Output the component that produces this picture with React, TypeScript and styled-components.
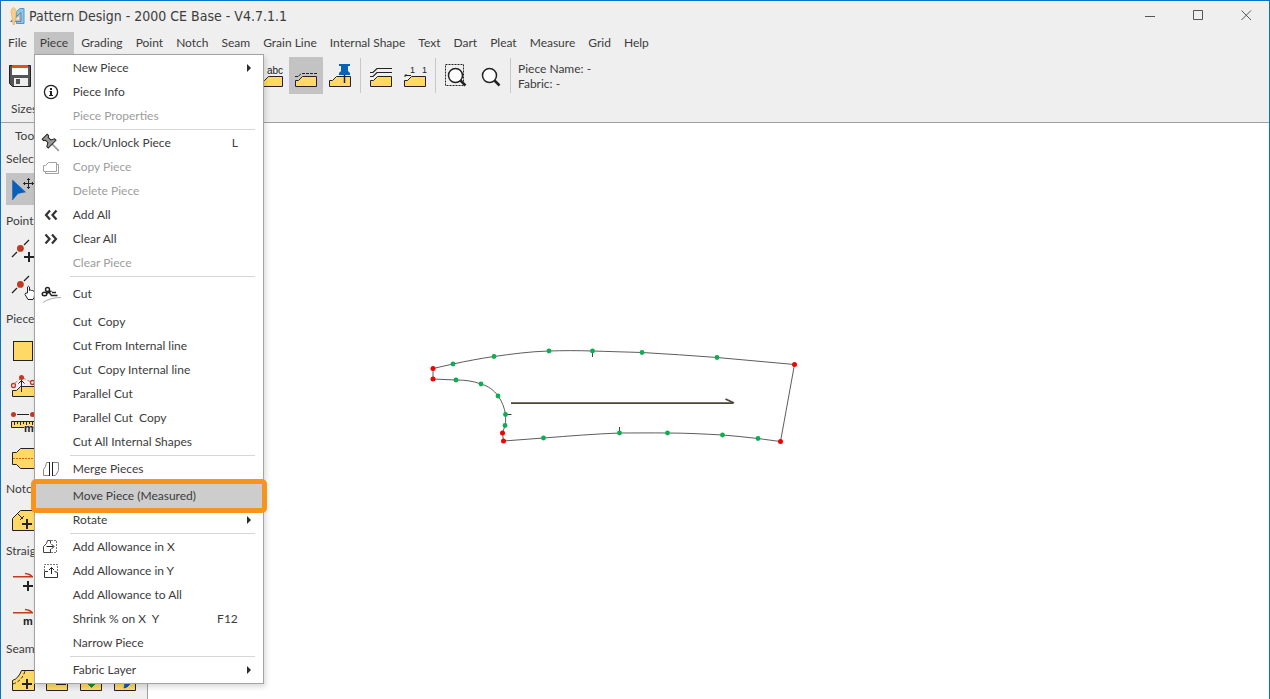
import React, { ReactNode } from "react";
import styled, { createGlobalStyle } from "styled-components";

const GlobalStyle = createGlobalStyle`
  * { box-sizing: border-box; }
  body { margin: 0; background: #fff; }
  button { font: inherit; color: inherit; background: none; border: 0; padding: 0; margin: 0; }
  svg { display: block; flex: none; }
`;

const ui = '"Lato", "Open Sans", sans-serif';
const ink = "#222";
const yellow = "#ffd966";
const red = "#c03a20";

const Window = styled.div`
  display: flex;
  flex-direction: column;
  min-height: 100vh;
  overflow: hidden;
  border: solid #0b73c5;
  border-width: 1px 1px 0;
  font: 12px/16px ${ui};
  color: #3c3c3c;
`;

const Header = styled.header`
  background: #efefef;
  border-bottom: 1px solid #a0a0a0;
`;

const TitleBar = styled.div`
  display: flex;
  align-items: center;
  height: 31px;
  padding: 0 0 2px 8px;
  gap: 4px;
`;

const Title = styled.h1`
  flex: 1;
  margin: 0;
  font: 14px/18px "DejaVu Sans Condensed", "DejaVu Sans", sans-serif;
`;

const WindowControls = styled.div`
  display: flex;
  gap: 2px;
`;

const WindowButton = styled.button`
  display: grid;
  place-items: center;
  width: 46px;
  height: 28px;
`;

const MenuBar = styled.nav`
  display: flex;
  gap: 1px;
  height: 22px;
  padding-left: 1px;
`;

const MenuSlot = styled.div`
  position: relative;
`;

const MenuTab = styled.button<{ $open?: boolean }>`
  height: 22px;
  padding: 0 6px;
  font-size: 12px;
  white-space: nowrap;
  background: ${(p) => (p.$open ? "#c3c3c3" : "transparent")};
`;

const Menu = styled.div`
  position: absolute;
  top: 22px;
  left: 0;
  z-index: 5;
  width: 230px;
  padding: 1px 0;
  background: #fff;
  border: 1px solid #a3a3a3;
  box-shadow: 2px 3px 5px rgba(0, 0, 0, 0.14);
`;

const MenuRow = styled.button<{ $tall?: boolean; $current?: boolean }>`
  display: flex;
  align-items: center;
  width: 100%;
  height: ${(p) => (p.$tall ? 32 : 24)}px;
  padding: 0 25px 0 6px;
  text-align: left;
  white-space: pre;
  position: relative;
  background: ${(p) => (p.$current ? "#cdcdcd" : "transparent")};
  &:disabled { color: #9d9d9d; }
`;

const Highlight = styled.span`
  position: absolute;
  inset: -5px -4px;
  border: 5px solid #f7941d;
  border-radius: 5px;
  pointer-events: none;
`;

const IconCell = styled.span`
  width: 20px;
  height: 20px;
  margin-right: 12px;
`;

const RowLabel = styled.span`
  flex: 1;
`;

const SubmenuMark = styled.span`
  margin-right: -13px;
  border: solid transparent;
  border-width: 4px 0 4px 4px;
  border-left-color: #2b2b2b;
`;

const Divider = styled.hr`
  height: 1px;
  margin: 1px 8px 1px 35px;
  border: 0;
  background: #d6d6d6;
`;

const ToolBar = styled.div`
  display: flex;
  align-items: stretch;
  height: 40px;
  padding: 3px 0 0 2px;
`;

const Group = styled.div<{ $offset?: boolean }>`
  display: flex;
  margin-left: ${(p) => (p.$offset ? 218 : 0)}px;
`;

const Tool = styled.button<{ $on?: boolean }>`
  width: 34px;
  height: 37px;
  background: ${(p) => (p.$on ? "#c3c3c3" : "transparent")};
`;

const Rule = styled.span`
  width: 1px;
  margin: 1px 3px;
  background: #c8c8c8;
`;

const PieceDetails = styled.div`
  padding: 4px 0 0 4px;
  line-height: 15px;
`;

const SizesBar = styled.div`
  height: 28px;
  padding: 7px 0 0 10px;
`;

const Body = styled.div`
  display: flex;
  flex: 1;
`;

const SideBar = styled.aside`
  width: 147px;
  flex: none;
  background: #efefef;
  border-right: 1px solid #a0a0a0;
`;

const SideTitle = styled.h2`
  margin: 0;
  padding: 5px 14px 2px;
  font: 12px/16px ${ui};
`;

const SideHeading = styled.h3`
  margin: 0;
  padding: 5px;
  font: 12px/16px ${ui};
`;

const ToolGrid = styled.div`
  display: grid;
  grid-template-columns: repeat(4, 34px);
  padding-left: 5px;
`;

const SideTool = styled.button<{ $on?: boolean }>`
  height: 36px;
  background: ${(p) =>
    p.$on ? "linear-gradient(#c3c3c3, #c3c3c3) 0 1px / 100% 32px no-repeat" : "transparent"};
`;

const Canvas = styled.main`
  flex: 1;
  min-width: 0;
  background: #fff;
`;

const Drawing = styled.svg`
  width: 100%;
  height: 100%;
`;

const Glyph = styled.text`
  font-family: "Liberation Sans", sans-serif;
  fill: #222;
`;

/* ---------- drawings ---------- */

const BarIcon = ({ children }: { children: ReactNode }) => (
  <svg width="34" height="37" fill="none" stroke={ink}>{children}</svg>
);
const Folder = () => <path d="M6.5 29.5V23.5H9.5L13.5 19.5H27.5V29.5Z" fill={yellow} />;
const Lens = () => (
  <>
    <circle cx="16.500" cy="18.500" r="7" fill="#fff" strokeWidth="1.500" />
    <path d="M21.500 23.500l5 5" strokeWidth="2.500" />
  </>
);

const SideIcon = ({ children }: { children: ReactNode }) => (
  <svg width="34" height="36" fill="none" stroke={ink}>{children}</svg>
);
const Plus = ({ x, y }: { x: number; y: number }) => (
  <path d={`M${x - 5} ${y}h10M${x} ${y - 5}v10`} strokeWidth="2" />
);
const PointLine = () => (
  <>
    <path d="M6 23l5-5M18 11l5-5" strokeWidth="1.3" />
    <circle cx="14.4" cy="14.4" r="3.4" fill={red} stroke="none" />
  </>
);

const MenuIcon = ({ children, grey }: { children: ReactNode; grey?: boolean }) => (
  <svg width="20" height="20" fill="none" stroke={grey ? "#a0a0a0" : ink}>{children}</svg>
);

const icons: Record<string, ReactNode> = {
  info: (
    <MenuIcon>
      <circle cx="10" cy="10" r="6.600" strokeWidth="1.300" />
      <path d="M10 9v5M10 6v2" strokeWidth="2" />
      <path d="M8.500 9.500H10M8 13.500h4" />
    </MenuIcon>
  ),
  pin: (
    <MenuIcon>
      <g transform="translate(9 9) rotate(-45)">
        <path d="M0 3v9.500" stroke="#999" strokeWidth="1.600" />
        <path d="M-3.500-7.500h7v2l-1.500 1v3.500l3.500 2v2h-11v-2l3.500-2v-3.500l-1.500-1z" fill="#999" />
      </g>
    </MenuIcon>
  ),
  copy: (
    <MenuIcon grey>
      <path d="M2.500 14.500V8.500h2l3-3h8v9zM4.500 14.500v2h13v-9h-2" />
    </MenuIcon>
  ),
  addAll: (
    <MenuIcon><path d="M9 5.500L5 10l4 4.500M15.500 5.500l-4 4.500 4 4.500" strokeWidth="2.200" stroke="#333" /></MenuIcon>
  ),
  clearAll: (
    <MenuIcon><path d="M4.500 5.500L8.500 10l-4 4.500M11 5.500l4 4.500-4 4.500" strokeWidth="2.200" stroke="#333" /></MenuIcon>
  ),
  cut: (
    <MenuIcon>
      <path d="M2 18.500C7 15 13 13.500 20 13.500" stroke="#a8a8a8" />
      <circle cx="6.500" cy="5.500" r="2" strokeWidth="1.400" />
      <ellipse cx="3.500" cy="10" rx="2.300" ry="1.800" strokeWidth="1.400" />
      <path d="M5.500 9.500l5-2.500M7.500 7.500l3 4h6M11 8.500h4" strokeWidth="1.400" />
    </MenuIcon>
  ),
  merge: (
    <MenuIcon>
      <path d="M8.500 3.500h-3l-1 4-2 3v6h6" stroke="#888" />
      <path d="M11.500 3.500h6v8l-3 5h-3" stroke="#888" />
      <path d="M8.500 3v14M11.500 3v14" />
    </MenuIcon>
  ),
  allowX: (
    <MenuIcon>
      <path d="M9.500 3.500h-3l-1 3-3 3v6h7M9.500 3.500v3M9.500 12v4" stroke="#444" />
      <path d="M10 3.500h5.500v12H10" strokeDasharray="2 1" stroke="#777" />
      <path d="M5.500 9.500h7M10.500 7l2.500 2.500-2.500 2.500" />
    </MenuIcon>
  ),
  allowY: (
    <MenuIcon>
      <path d="M7 10.500H3.500v6h13v-5l-3-1" stroke="#333" />
      <path d="M3.500 10V3.500h13V11" strokeDasharray="2 1" stroke="#777" />
      <path d="M10.500 13V6.500M8 9l2.500-2.500L13 9" />
    </MenuIcon>
  ),
};

type Entry = {
  label?: string; icon?: string; keys?: string; sub?: boolean; off?: boolean; tall?: boolean; current?: boolean;
};

/* An entry without a label is a divider. */
const pieceMenu: Entry[] = [
  { label: "New Piece", sub: true },
  { label: "Piece Info", icon: "info" },
  { label: "Piece Properties", off: true },
  {},
  { label: "Lock/Unlock Piece", icon: "pin", keys: "L" },
  { label: "Copy Piece", icon: "copy", off: true },
  { label: "Delete Piece", off: true },
  { label: "Add All", icon: "addAll" },
  { label: "Clear All", icon: "clearAll" },
  { label: "Clear Piece", off: true },
  {},
  { label: "Cut", icon: "cut", tall: true },
  { label: "Cut  Copy" },
  { label: "Cut From Internal line" },
  { label: "Cut  Copy Internal line" },
  { label: "Parallel Cut" },
  { label: "Parallel Cut  Copy" },
  { label: "Cut All Internal Shapes" },
  {},
  { label: "Merge Pieces", icon: "merge" },
  {},
  { label: "Move Piece (Measured)", current: true },
  { label: "Rotate", sub: true },
  {},
  { label: "Add Allowance in X", icon: "allowX" },
  { label: "Add Allowance in Y", icon: "allowY" },
  { label: "Add Allowance to All" },
  { label: "Shrink % on X  Y", keys: "F12" },
  { label: "Narrow Piece" },
  {},
  { label: "Fabric Layer", sub: true },
];

const PieceMenu = () => (
  <Menu role="menu" aria-label="Piece">
    {pieceMenu.map((e, i) =>
      e.label ? (
        <MenuRow key={i} role="menuitem" disabled={e.off} $tall={e.tall} $current={e.current}>
          <IconCell>{e.icon && icons[e.icon]}</IconCell>
          <RowLabel>{e.label}</RowLabel>
          {e.keys && <span>{e.keys}</span>}
          {e.sub && <SubmenuMark />}
          {e.current && <Highlight />}
        </MenuRow>
      ) : (
        <Divider key={i} />
      )
    )}
  </Menu>
);

const tabs = ["File", "Piece", "Grading", "Point", "Notch", "Seam", "Grain Line", "Internal Shape", "Text", "Dart", "Pleat", "Measure", "Grid", "Help"];

const sideGroups: { name: string; tools: { name: string; on?: boolean; art: ReactNode }[]; wide?: boolean }[] = [
  {
    name: "Select",
    tools: [
      {
        name: "Select", on: true,
        art: (
          <>
            <path d="M6.500 8v20l5.500-6.500 7.500-1.500z" fill="#0a5fb8" stroke="#0a5fb8" strokeWidth=".5" />
            <path d="M17.500 11.500h10M22.500 6.500v10M19 10l-1.500 1.500L19 13M26 10l1.500 1.500L26 13M21 8l1.500-1.500L24 8M21 15l1.500 1.500L24 15" />
          </>
        ),
      },
    ],
  },
  {
    name: "Point",
    tools: [
      { name: "Add point", art: <><PointLine /><Plus x={23} y={23} /></> },
      {
        name: "Move point",
        art: (
          <>
            <PointLine />
            <path d="M21.500 23v-6q1-1.500 2 0v3.500q1-1 2 0 1-.5 1.500.5 1.500-.5 1.500 1v3q0 2.500-1.500 4.500h-5l-3-5q0-2 2.500-1.500z" fill="#fff" />
          </>
        ),
      },
    ],
  },
  {
    name: "Piece",
    tools: [
      { name: "Rectangle", art: <rect x="7.500" y="9.500" width="19" height="19" fill={yellow} /> },
      {
        name: "Raise outline",
        art: (
          <>
            <path d="M6.500 28.500V22.500h4l4-4h14v10z" fill={yellow} />
            <path d="M9 15l5-4M17 10l8 4" stroke="#d66" strokeDasharray="3 2" />
            <path d="M15.500 24V12M12.500 15.500l3-3 3 3" />
            <circle cx="15.500" cy="9.500" r="2.500" fill={red} stroke="none" />
            <circle cx="7.500" cy="17.500" r="2" stroke={red} strokeWidth="1.300" />
            <circle cx="26.500" cy="14.500" r="2" stroke={red} strokeWidth="1.300" />
          </>
        ),
      },
      {
        name: "Measure distance",
        art: (
          <>
            <path d="M11 10.500h12" />
            <circle cx="7.500" cy="10.500" r="2.500" fill={red} stroke="none" />
            <circle cx="26.500" cy="10.500" r="2.500" fill={red} stroke="none" />
            <path d="M5.500 17.500h23v6h-23z" fill={yellow} />
            <path d="M8.500 18v3M11.500 18v2M14.500 18v3M17.500 18v2M20.500 18v3M23.500 18v2M26.500 18v3" />
            <Glyph x="18" y="28" fontSize="11" fontWeight="bold" stroke="#efefef" strokeWidth="1" paintOrder="stroke">m</Glyph>
          </>
        ),
      },
      {
        name: "Fold",
        art: (
          <>
            <path d="M6.500 12.500h4l4-4h14v20h-14l-4-4h-4z" fill={yellow} />
            <path d="M7 18.500h21" stroke="#e06010" strokeDasharray="2 1" />
          </>
        ),
      },
    ],
  },
  {
    name: "Notch",
    tools: [
      {
        name: "Add notch",
        art: (
          <>
            <path d="M6.500 28.500v-12l8-8h14v20z" fill={yellow} />
            <path d="M11 11l6 6M14 18l4-4" />
            <Plus x={21} y={22} />
          </>
        ),
      },
    ],
  },
  {
    name: "Straight",
    tools: [
      { name: "Add line", art: <><path d="M7 12.800h20M19 9.500q5 .5 7 3" stroke={red} strokeWidth="1.500" /><Plus x={22} y={22} /></> },
      {
        name: "Measured line",
        art: (
          <>
            <path d="M7 12.800h20M19 9.500q5 .5 7 3" stroke={red} strokeWidth="1.500" />
            <Glyph x="17" y="25" fontSize="11" fontWeight="bold" stroke="none">m</Glyph>
          </>
        ),
      },
    ],
  },
  {
    name: "Seam",
    wide: true,
    tools: [
      {
        name: "Add seam",
        art: (
          <>
            <path d="M6.500 28.500v-10q6-2 9-10h13v20z" fill={yellow} />
            <path d="M7 22q9-3 12-13" strokeDasharray="3 2" />
            <Plus x={21} y={22} />
          </>
        ),
      },
      { name: "Remove seam", art: <><path d="M6.500 8.500h21v20h-21z" fill={yellow} /><path d="M16 22h10" strokeWidth="2" /></> },
      { name: "Accept seam", art: <><path d="M6.500 8.500h21v20h-21z" fill={yellow} /><path d="M14 22l3.500 3.500L21 22z" fill="#1d8a3c" stroke="#1d8a3c" /></> },
      { name: "Edit seam", art: <><path d="M6.500 8.500h21v20h-21z" fill={yellow} /><path d="M16 26l1-4 5-5 2 3-5 5z" fill="#0a5fb8" stroke="#0a5fb8" /></> },
    ],
  },
];

const redPoints = [[433, 368.500], [433, 379], [794.500, 364.500], [780.500, 441.500], [503.500, 441], [502.500, 433]];
const greenPoints = [
  [453, 364], [494, 356.500], [549, 351], [592.500, 351], [642, 352.500], [717, 357.500],
  [456, 380], [481, 384], [498, 396], [505.500, 414.500], [505, 425.500],
  [543.500, 438], [619.500, 433], [667.500, 433], [722.500, 435], [758, 438.500],
];

const PatternPiece = () => (
  <Drawing role="img" aria-label="Pattern piece">
    <g transform="translate(-148 -123)" fill="none" stroke="#333" strokeWidth=".8">
      <path d="M433 368.500C440 367 446 365.500 453 364C467 361 480 358.500 494 356.500C512 354 530 351.500 549 351C563 350.500 578 350.500 592.500 351C609 351.500 625 352 642 352.500C667 354 692 355.500 717 357.500L794.500 364.500L780.500 441.500C773 440.500 765 439.500 758 438.500C746 437 734 436 722.500 435C704 434 686 433 667.500 433C651 432.800 635 433 619.500 433C594 434 569 436 543.500 438L503.500 441L502.500 433L505 425.500C506 422 505.500 418 505.500 414.500C504.500 408 502 401 498 396C494 390 488 386 481 384C473 381 465 380 456 380L433 379Z" />
      <path d="M592.500 351v6M619.500 433v-6M505.500 414.500h6" stroke="#111" />
      <path d="M511 403.200h222" stroke="#4a4536" strokeWidth="1.700" />
      <path d="M725.500 399l8.500 4" stroke="#4a4536" strokeWidth="1.700" />
    </g>
    <g transform="translate(-148 -123)">
      {greenPoints.map(([x, y]) => <circle key={x} cx={x} cy={y} r="2.400" fill="#08b050" />)}
      {redPoints.map(([x, y]) => <circle key={`${x}-${y}`} cx={x} cy={y} r="2.500" fill="#f40000" />)}
    </g>
  </Drawing>
);

export default function App() {
  return (
    <Window>
      <GlobalStyle />
      <Header>
        <TitleBar>
          <svg width="16" height="18" fill="none">
            <path d="M7.500 4.500L11 1.500h4v15H7.500z" fill="#8cc8ee" stroke="#4a9ad2" />
            <path d="M1.500 14.500L12 5.500v9z" fill="#b3bec6" stroke="#73828c" />
            <path d="M6.500 12.500l3.500-3v3z" fill="#efefef" />
            <path d="M4.500.5q3.500 2 2.500 6.500L5.500 17.500h-1.500L2.500 7q-1.500-4.500 2-6.500z" fill="#f6cf8e" stroke="#e0b064" strokeWidth=".7" />
          </svg>
          <Title>Pattern Design - 2000 CE Base - V4.7.1.1</Title>
          <WindowControls>
            <WindowButton aria-label="Minimize">
              <svg width="11" height="11" stroke="#555"><path d="M0 6.500h10" /></svg>
            </WindowButton>
            <WindowButton aria-label="Maximize">
              <svg width="11" height="11" stroke="#555" fill="none"><path d="M.5 .5h9v9h-9z" /></svg>
            </WindowButton>
            <WindowButton aria-label="Close">
              <svg width="11" height="11" stroke="#555"><path d="M.5 .5l9.500 9.500M10 .5L.5 10" /></svg>
            </WindowButton>
          </WindowControls>
        </TitleBar>
        <MenuBar>
          {tabs.map((t) => (
            <MenuSlot key={t}>
              <MenuTab $open={t === "Piece"} aria-expanded={t === "Piece"}>{t}</MenuTab>
              {t === "Piece" && <PieceMenu />}
            </MenuSlot>
          ))}
        </MenuBar>
        <ToolBar role="toolbar">
          <Group>
            <Tool aria-label="Save">
              <BarIcon>
                <path d="M6.500 8.500h21v21h-18l-3-3z" fill="#555" />
                <path d="M9 8h16v3H9z" fill="#d9561a" stroke="none" />
                <path d="M9 11h16v7H9z" fill="#fff" stroke="none" />
                <path d="M11 21h14v8H11z" fill="#eee" stroke="none" />
                <path d="M13 22h4v5h-4z" fill="#555" stroke="none" />
              </BarIcon>
            </Tool>
          </Group>
          <Group $offset>
            <Tool aria-label="Labels">
              <BarIcon><Folder /><Glyph x="12" y="17" fontSize="10" stroke="none">abc</Glyph></BarIcon>
            </Tool>
            <Tool $on aria-label="Seam lines">
              <BarIcon><Folder /><path d="M6 19.500h3M9.500 19l3-2.500M13 16.500h15" strokeDasharray="3 1" /></BarIcon>
            </Tool>
            <Tool aria-label="Pin piece">
              <BarIcon>
                <Folder />
                <path d="M16 7h11v2h-2v5l2 2v2H16v-2l2-2V9h-2z" fill="#0a62b8" stroke="none" />
                <path d="M21.500 18v8" strokeWidth="1.500" />
              </BarIcon>
            </Tool>
          </Group>
          <Rule />
          <Group>
            <Tool aria-label="Stack">
              <BarIcon>
                <Folder />
                <path d="M6 15.500h3l4-4h15M6 19.500h3l4-4h15" strokeWidth="1.200" />
              </BarIcon>
            </Tool>
            <Tool aria-label="Numbering">
              <BarIcon>
                <Folder />
                <path d="M7 18.500h6M8.500 17l-1.500 1.500V20" />
                <Glyph x="12" y="16" fontSize="9" stroke="none">1</Glyph>
                <Glyph x="24" y="16" fontSize="9" stroke="none">1</Glyph>
              </BarIcon>
            </Tool>
          </Group>
          <Rule />
          <Group>
            <Tool aria-label="Zoom to area">
              <BarIcon>
                <path d="M6.500 7.500h18v21h-18z" strokeDasharray="2 1" />
                <Lens />
              </BarIcon>
            </Tool>
            <Tool aria-label="Zoom">
              <BarIcon><Lens /></BarIcon>
            </Tool>
          </Group>
          <Rule />
          <PieceDetails>
            <div>Piece Name: -</div>
            <div>Fabric: -</div>
          </PieceDetails>
        </ToolBar>
        <SizesBar>Sizes</SizesBar>
      </Header>
      <Body>
        <SideBar>
          <SideTitle>Tools</SideTitle>
          {sideGroups.map((g) => (
            <section key={g.name}>
              <SideHeading>{g.name}</SideHeading>
              {g.wide ? (
                <ToolGrid>
                  {g.tools.map((t) => (
                    <SideTool key={t.name} aria-label={t.name}><SideIcon>{t.art}</SideIcon></SideTool>
                  ))}
                </ToolGrid>
              ) : (
                g.tools.map((t) => (
                  <ToolGrid key={t.name}>
                    <SideTool $on={t.on} aria-label={t.name}><SideIcon>{t.art}</SideIcon></SideTool>
                  </ToolGrid>
                ))
              )}
            </section>
          ))}
        </SideBar>
        <Canvas><PatternPiece /></Canvas>
      </Body>
    </Window>
  );
}
